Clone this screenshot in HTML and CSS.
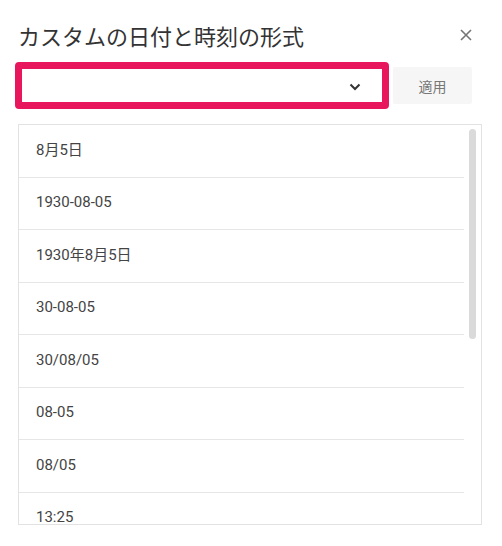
FILE: index.html
```html
<!DOCTYPE html>
<html lang="ja">

<head>
  <meta charset="UTF-8" />
  <meta name="viewport" content="width=device-width, initial-scale=1.0" />
  <title>カスタムの日付と時刻の形式</title>
  <link rel="stylesheet" href="styles.css">
</head>

<body>
  <div class="dialog">
    <div class="header">
      <h1 class="title">カスタムの日付と時刻の形式</h1>
      <button class="close-btn" aria-label="閉じる">
        <svg width="12" height="12" viewBox="0 0 12 12">
          <path d="M1 1 L11 11 M11 1 L1 11" stroke="#757575" stroke-width="1.6" fill="none" />
        </svg>
      </button>
    </div>

    <div class="controls">
      <div class="select-box">
        <svg class="chevron" width="12" height="8" viewBox="0 0 12 8">
          <path d="M1.5 1.5 L6 6 L10.5 1.5" stroke="#333" stroke-width="2" fill="none" />
        </svg>
      </div>
      <button class="apply-btn">適用</button>
    </div>

    <div class="format-list">
      <ul class="items">
        <li>8月5日</li>
        <li>1930-08-05</li>
        <li>1930年8月5日</li>
        <li>30-08-05</li>
        <li>30/08/05</li>
        <li>08-05</li>
        <li>08/05</li>
        <li>13:25</li>
      </ul>
      <div class="scroll-track">
        <div class="scroll-thumb"></div>
      </div>
    </div>
  </div>
</body>

</html>
```

FILE: styles.css
```css
body {
  margin: 0;
  background: #ffffff;
  font-family: Roboto, "Noto Sans CJK JP", sans-serif;
  color: #3c4043;
}

.dialog {
  padding: 19px 21px 0 15px;
}

.header {
  display: flex;
  justify-content: space-between;
  align-items: center;
  padding-left: 3px;
}

.title {
  margin: 0;
  font-family: "Noto Sans CJK JP", sans-serif;
  font-weight: 400;
  font-size: 22px;
  line-height: 32px;
  color: #333333;
}

.close-btn {
  border: none;
  background: none;
  padding: 0;
  margin-right: 9px;
  width: 12px;
  height: 12px;
  display: flex;
  cursor: pointer;
}

.controls {
  display: flex;
  align-items: center;
  margin-top: 11px;
}

.select-box {
  box-sizing: border-box;
  width: 374px;
  height: 47px;
  border: 7px solid #e8175d;
  border-radius: 4px;
  background: #ffffff;
  display: flex;
  align-items: center;
  justify-content: flex-end;
  padding-right: 21px;
}

.chevron {
  margin-top: 2px;
}

.apply-btn {
  margin-left: 4px;
  width: 79px;
  height: 37px;
  border: none;
  border-radius: 2px;
  background: #f6f6f6;
  color: #777777;
  font-family: "Noto Sans CJK JP", sans-serif;
  font-size: 14px;
  cursor: pointer;
}

.format-list {
  box-sizing: border-box;
  display: flex;
  margin: 15px 0 0 3px;
  width: 464px;
  height: 401px;
  border: 1px solid #e2e2e2;
  overflow: hidden;
}

.items {
  list-style: none;
  margin: 0;
  padding: 0;
  width: 445px;
  flex-shrink: 0;
}

.items li {
  box-sizing: border-box;
  height: 52.5px;
  display: flex;
  align-items: center;
  padding: 0 0 2px 17px;
  font-size: 15px;
  line-height: 18px;
  color: #444444;
  border-bottom: 1px solid #e6e6e6;
}

.scroll-track {
  margin-left: 5px;
  padding-top: 4px;
}

.scroll-thumb {
  width: 7px;
  height: 210px;
  border-radius: 4px;
  background: #dadada;
}
```
